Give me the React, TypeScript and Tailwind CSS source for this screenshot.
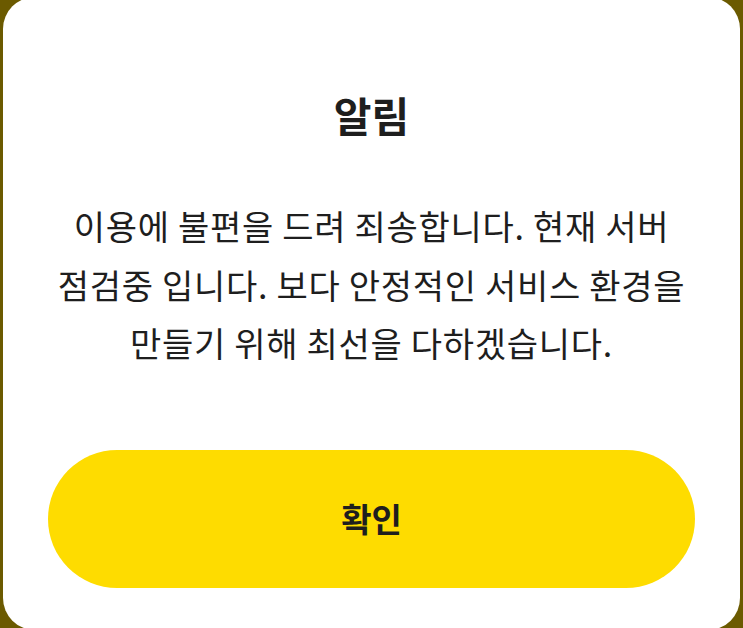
export default function App() {
  return (
    <div className="h-[628px] overflow-hidden bg-[#6b5a00] px-[3px]" style={{ fontFamily: '"Noto Sans CJK KR", "Noto Sans", sans-serif' }}>
      <div className="-mt-[3px] flex h-[633px] flex-col items-center rounded-[32px] bg-white px-[45px] pt-[97px]">
        <h1 className="text-[41px] font-bold leading-[41px] text-[#1e1e1e]">알림</h1>
        <p className="mt-[62px] whitespace-nowrap text-center text-[34px] leading-[58.5px] tracking-[0.7px] text-[#1e1e1e]">
          이용에 불편을 드려 죄송합니다. 현재 서버
          <br />
          점검중 입니다. 보다 안정적인 서비스 환경을
          <br />
          만들기 위해 최선을 다하겠습니다.
        </p>
        <button className="mt-[77px] flex h-[138px] w-full items-center justify-center rounded-full bg-[#fedc00] text-[33px] font-bold text-[#1e1e1e]">
          확인
        </button>
      </div>
    </div>
  );
}
